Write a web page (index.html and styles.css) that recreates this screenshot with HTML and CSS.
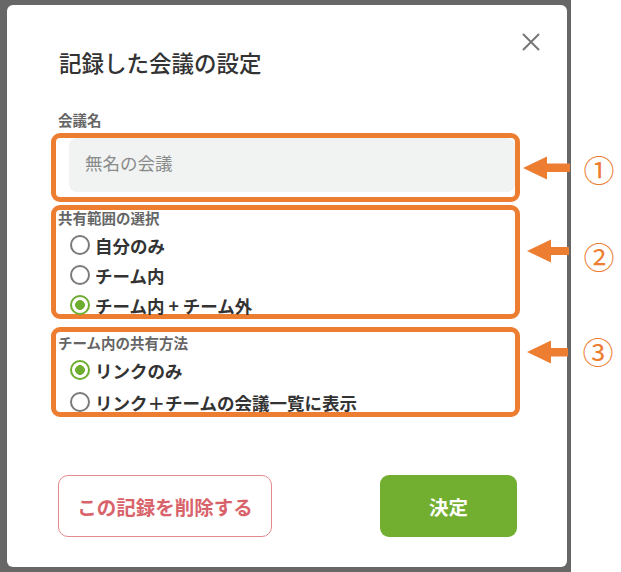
FILE: index.html
```html
<!DOCTYPE html>
<html lang="ja">
<head>
<meta charset="utf-8">
<title>記録した会議の設定</title>
<link rel="stylesheet" href="styles.css">
</head>
<body>
  <div class="overlay">
    <div class="modal">
      <button class="close" aria-label="閉じる">
        <svg viewBox="0 0 18 18" width="18" height="18"><path d="M1.5 1.5 L16.5 16.5 M16.5 1.5 L1.5 16.5" stroke="#777" stroke-width="2" fill="none" stroke-linecap="round"/></svg>
      </button>
      <h1 class="modal-title">記録した会議の設定</h1>

      <div class="field-label name-label">会議名</div>
      <div class="mark mark-name">
        <input class="name-input" type="text" placeholder="無名の会議">
      </div>

      <div class="mark mark-scope">
        <div class="field-label">共有範囲の選択</div>
        <div class="options options-scope">
          <div class="option"><span class="radio"></span>自分のみ</div>
          <div class="option"><span class="radio"></span>チーム内</div>
          <div class="option"><span class="radio on"></span>チーム内 + チーム外</div>
        </div>
      </div>

      <div class="mark mark-method">
        <div class="field-label">チーム内の共有方法</div>
        <div class="options options-method">
          <div class="option"><span class="radio on"></span>リンクのみ</div>
          <div class="option"><span class="radio"></span>リンク＋チームの会議一覧に表示</div>
        </div>
      </div>

      <div class="actions">
        <button class="btn btn-delete">この記録を削除する</button>
        <button class="btn btn-ok">決定</button>
      </div>
    </div>
  </div>

  <svg class="callouts" viewBox="0 0 621 572" width="621" height="572">
    <g fill="#ed7d31">
      <polygon points="523,168 547,156.5 547,163.5 570,163.5 570,172 547,172 547,179.5"/>
      <polygon points="527,251 551,239.5 551,247 569,247 569,255 551,255 551,262.5"/>
      <polygon points="527,352 551,340.5 551,348 568,348 568,356.5 551,356.5 551,363.5"/>
    </g>
    <g class="num">
      <text x="599" y="168">①</text>
      <text x="599" y="255">②</text>
      <text x="598" y="350">③</text>
    </g>
  </svg>
</body>
</html>
```

FILE: styles.css
```css
* {
  box-sizing: border-box;
}

body {
  margin: 0;
  width: 621px;
  height: 572px;
  display: flex;
  position: relative;
  overflow: hidden;
  background: #fff;
  font-family: "Noto Sans CJK JP", "Noto Sans", sans-serif;
  color: #333;
}

/* dimmed page behind the dialog */
.overlay {
  width: 571px;
  height: 572px;
  background: #676767;
  padding: 5px 4px 5px 7px;
  display: flex;
}

.modal {
  flex: 1;
  position: relative;
  background: #fff;
  border-radius: 6px;
  padding: 42px 47px 30px 44px;
  display: flex;
  flex-direction: column;
}

.close {
  position: absolute;
  top: 28px;
  right: 27px;
  width: 18px;
  height: 18px;
  padding: 0;
  border: none;
  background: none;
  display: flex;
}

.modal-title {
  margin: 0 0 35px 8px;
  font-size: 22.5px;
  line-height: 30px;
  font-weight: 500;
  color: #333;
}

.field-label {
  font-size: 14.5px;
  line-height: 16px;
  font-weight: 700;
  color: #666;
  margin-left: 2px;
}

.name-label {
  margin-left: 7px;
  margin-bottom: 5px;
}

/* orange highlight frames */
.mark {
  border: 5px solid #ed7d31;
  border-radius: 9px;
}

.mark-name {
  padding: 0 0 5px 13px;
}

.name-input {
  display: block;
  width: 100%;
  height: 54px;
  border: none;
  border-radius: 8px;
  background: #f0f3f2;
  padding: 0 16px 5px;
  font-family: inherit;
  font-size: 17.5px;
  color: #333;
  outline: none;
}

.name-input::placeholder {
  color: #8a8a8a;
}

.mark-scope {
  margin-top: 3px;
}

.mark-method {
  margin-top: 8px;
  padding-top: 3px;
  padding-bottom: 1px;
}

.options {
  display: flex;
  flex-direction: column;
  margin-top: 10px;
  padding-left: 14px;
}

.options-scope {
  gap: 12px;
}

.options-method {
  gap: 14px;
}

.option {
  display: flex;
  align-items: center;
  gap: 5px;
  height: 18px;
  font-size: 17.5px;
  font-weight: 700;
  color: #333;
  white-space: nowrap;
}

.radio {
  flex: none;
  width: 20px;
  height: 20px;
  border: 2px solid #7a7a7a;
  border-radius: 50%;
  background: #fff;
}

.radio.on {
  border: 2.5px solid #6dad2f;
  background: radial-gradient(circle, #6dad2f 0 4.6px, #fff 5.1px);
}

.actions {
  margin-top: 58px;
  display: flex;
  justify-content: space-between;
  padding: 0 3px 0 7px;
}

.btn {
  height: 62px;
  border-radius: 10px;
  font-family: inherit;
  font-size: 19.5px;
  font-weight: 700;
  cursor: pointer;
}

.btn-delete {
  width: 214px;
  border: 1.5px solid #e58a8f;
  background: #fff;
  color: #d9636b;
}

.btn-ok {
  width: 137px;
  border: none;
  border-radius: 9px;
  background: #72ae2f;
  color: #fff;
}

/* annotation arrows and numbers on top of the dialog */
.callouts {
  position: absolute;
  left: 0;
  top: 0;
  pointer-events: none;
}

.num text {
  fill: #ed7d31;
  font-family: "Noto Sans CJK JP", sans-serif;
  font-size: 31px;
  text-anchor: middle;
  dominant-baseline: central;
}
```
